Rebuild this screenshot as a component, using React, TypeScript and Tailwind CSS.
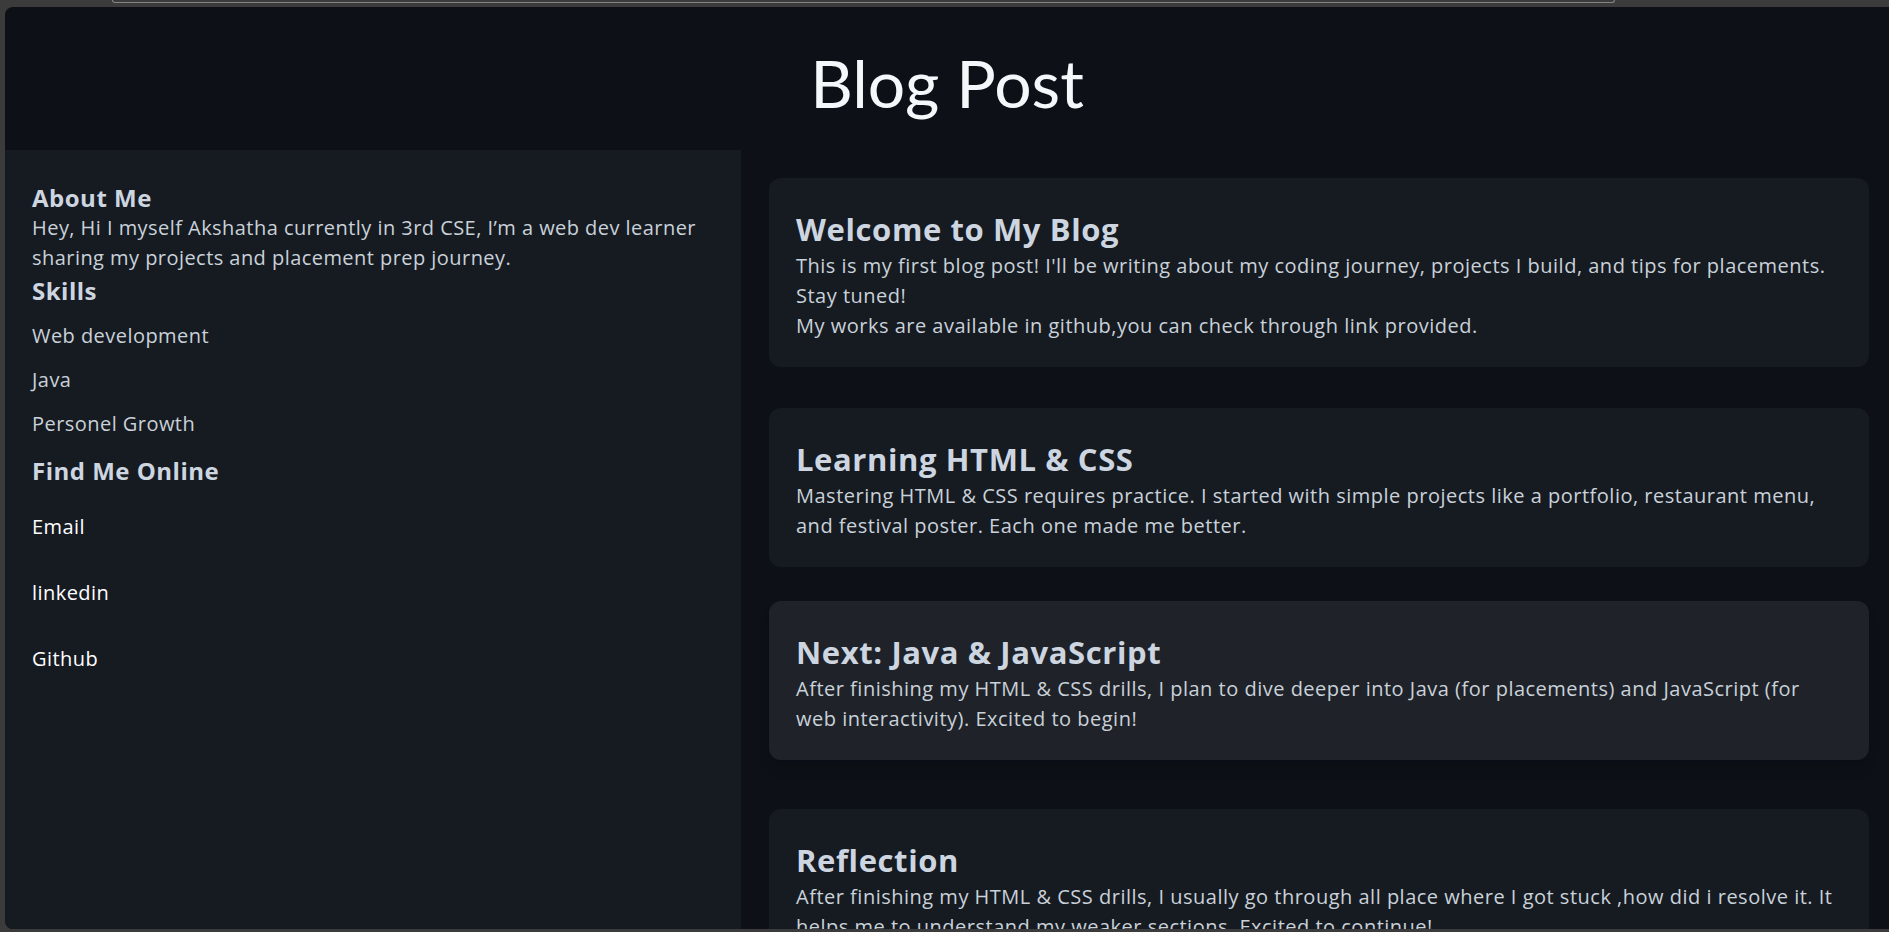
const posts = [
  {
    title: "Welcome to My Blog",
    body: [
      "This is my first blog post! I'll be writing about my coding journey, projects I build, and tips for placements. Stay tuned!",
      "My works are available in github,you can check through link provided.",
    ],
  },
  {
    title: "Learning HTML & CSS",
    body: [
      "Mastering HTML & CSS requires practice. I started with simple projects like a portfolio, restaurant menu, and festival poster. Each one made me better.",
    ],
  },
  {
    title: "Next: Java & JavaScript",
    body: [
      "After finishing my HTML & CSS drills, I plan to dive deeper into Java (for placements) and JavaScript (for web interactivity). Excited to begin!",
    ],
  },
  {
    title: "Reflection",
    body: [
      "After finishing my HTML & CSS drills, I usually go through all place where I got stuck ,how did i resolve it. It helps me to understand my weaker sections. Excited to continue!",
    ],
  },
]

const gaps = ["mt-0", "mt-[41px]", "mt-[34px]", "mt-[49px]"]

function Sidebar() {
  return (
    <aside className="w-[736px] shrink-0 bg-[#161b22] pl-[27px] pr-[27px] pt-[33px] flex flex-col tracking-[0.45px]">
      <h3 className="text-[24px] leading-[30px] font-bold tracking-[0.5px] text-[#cdd6e0]">About Me</h3>
      <p className="text-[20px] leading-[30px] text-[#c9d1d9]">
        Hey, Hi I myself Akshatha currently in 3rd CSE, I’m a web dev learner sharing my projects and placement prep journey.
      </p>
      <h3 className="mt-[3px] text-[24px] leading-[30px] font-bold tracking-[0.5px] text-[#cdd6e0]">Skills</h3>
      <ul className="mt-[15px] flex flex-col gap-[14px] text-[20px] leading-[30px] text-[#c9d1d9]">
        <li>Web development</li>
        <li>Java</li>
        <li>Personel Growth</li>
      </ul>
      <h3 className="mt-[17px] text-[24px] leading-[30px] font-bold tracking-[0.5px] text-[#cdd6e0]">Find Me Online</h3>
      <div className="mt-[26px] flex flex-col gap-[36px] text-[20px] leading-[30px] text-white">
        <a href="#">Email</a>
        <a href="#">linkedin</a>
        <a href="#">Github</a>
      </div>
    </aside>
  )
}

export default function App() {
  return (
    <div className="h-screen overflow-hidden bg-[#3b3b3b] flex flex-col font-['Open_Sans','Noto_Sans',sans-serif]">
      <div className="h-[7px] shrink-0">
        <div className="ml-[112px] w-[1503px] h-[3px] border-x border-b border-[#858585] rounded-b-[4px]" />
      </div>
      <div className="flex-1 min-h-0 pl-[5px] pb-[3px] flex">
        <div className="flex-1 rounded-tl-[8px] rounded-bl-[8px] overflow-hidden bg-[#0d1117] flex flex-col">
          <header className="h-[143px] shrink-0 pt-[43px] text-center">
            <h1 className="font-['Lato',sans-serif] text-[66px] leading-none font-normal text-[#f4f8fb]">Blog Post</h1>
          </header>
          <div className="flex-1 min-h-0 flex">
            <Sidebar />
            <main className="flex-1 pl-[28px] pr-[20px] pt-[28px] flex flex-col">
              {posts.map((post, i) => (
                <article
                  key={post.title}
                  className={`${gaps[i]} shrink-0 rounded-[12px] px-[27px] pt-[29px] pb-[26px] ${
                    i === 2 ? "bg-[#1f2329] shadow-lg" : "bg-[#161b22]"
                  }`}
                >
                  <h2 className="text-[31px] leading-[44px] font-bold tracking-[0.6px] text-[#cdd6e0]">{post.title}</h2>
                  {post.body.map((line) => (
                    <p key={line} className="text-[20px] leading-[30px] tracking-[0.5px] text-[#c9d1d9]">
                      {line}
                    </p>
                  ))}
                </article>
              ))}
            </main>
          </div>
        </div>
      </div>
    </div>
  )
}
